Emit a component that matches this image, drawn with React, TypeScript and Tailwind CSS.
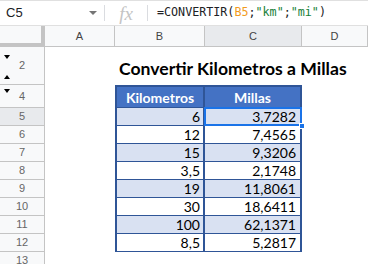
const data = [
  { n: 5, km: "6", mi: "3,7282" },
  { n: 6, km: "12", mi: "7,4565" },
  { n: 7, km: "15", mi: "9,3206" },
  { n: 8, km: "3,5", mi: "2,1748" },
  { n: 9, km: "19", mi: "11,8061" },
  { n: 10, km: "30", mi: "18,6411" },
  { n: 11, km: "100", mi: "62,1371" },
  { n: 12, km: "8,5", mi: "5,2817" },
];

function Toolbar() {
  return (
    <div className="flex items-center h-[26px] border-t border-b border-[#e0e0e0] font-['Liberation_Sans',sans-serif]">
      <div className="flex items-center justify-between w-[104px] pl-[6px] pr-[7px]">
        <span className="text-[13px] text-[#202124]">C5</span>
        <span className="w-0 h-0 border-l-[4px] border-r-[4px] border-t-[4px] border-l-transparent border-r-transparent border-t-[#757575]" />
      </div>
      <div className="w-px h-[16px] bg-[#dadce0]" />
      <div className="w-[42px] flex justify-center">
        <span className="font-['Liberation_Serif',serif] italic text-[19px] leading-none text-[#c4c4c4]">fx</span>
      </div>
      <div className="w-px h-[16px] bg-[#dadce0]" />
      <div className="pl-[9px] font-['DejaVu_Sans_Mono',monospace] text-[11.7px] text-[#202124] whitespace-nowrap">
        =CONVERTIR(<span className="text-[#f29b1d]">B5</span>;<span className="text-[#188038]">"km"</span>;<span className="text-[#188038]">"mi"</span>)
      </div>
    </div>
  );
}

function ColumnHeaders() {
  const cols = [
    { l: "A", w: "w-[70px]", sel: false },
    { l: "B", w: "w-[90px]", sel: false },
    { l: "C", w: "w-[97px]", sel: true },
    { l: "D", w: "w-[66px]", sel: false },
  ];
  return (
    <div className="flex h-[21px] font-['Liberation_Sans',sans-serif] text-[11px] text-[#444]">
      <div className="w-[45px] bg-[#f8f9fa] border-r-4 border-b-4 border-[#c4c4c4]" />
      {cols.map((c) => (
        <div
          key={c.l}
          className={`${c.w} flex items-center justify-center border-r border-b border-[#c4c4c4] ${c.sel ? "bg-[#e8eaed]" : "bg-[#f8f9fa]"}`}
        >
          {c.l}
        </div>
      ))}
    </div>
  );
}

function RowHeaders() {
  const cell =
    "relative flex items-center justify-center border-b border-[#c4c4c4]";
  return (
    <div className="w-[45px] shrink-0 bg-[#f8f9fa] border-r border-[#c4c4c4] font-['Liberation_Sans',sans-serif] text-[11px] text-[#666]">
      <div className={`${cell} h-[38px]`}>
        <span className="absolute top-[8px] left-[4px] w-0 h-0 border-l-[3px] border-r-[3px] border-t-[4px] border-l-transparent border-r-transparent border-t-black" />
        2
        <span className="absolute bottom-[5px] left-[4px] w-0 h-0 border-l-[3px] border-r-[3px] border-b-[4px] border-l-transparent border-r-transparent border-b-black" />
      </div>
      <div className={`${cell} h-[23px]`}>
        <span className="absolute top-[4px] left-[4px] w-0 h-0 border-l-[3px] border-r-[3px] border-t-[4px] border-l-transparent border-r-transparent border-t-black" />
        4
      </div>
      {data.map((r) => (
        <div
          key={r.n}
          className={`${cell} h-[18px] ${r.n === 5 ? "bg-[#e8eaed]" : ""}`}
        >
          {r.n}
        </div>
      ))}
      <div className={`${cell} h-[18px]`}>13</div>
    </div>
  );
}

export default function App() {
  return (
    <div className="w-[368px] h-[264px] overflow-hidden bg-white">
      <Toolbar />
      <ColumnHeaders />
      <div className="flex">
        <RowHeaders />
        <div className="flex-1 font-['Lato',sans-serif]">
          <div className="h-[38px] flex items-end pl-[74px] pb-[7px]">
            <span className="font-bold text-[17.6px] leading-none text-black whitespace-nowrap">
              Convertir Kilometros a Millas
            </span>
          </div>
          <div className="ml-[70px] w-[187px] text-[14px]">
            <div className="flex h-[23px] bg-[#4472c4] border-2 border-b border-[#2f5597] text-white font-bold">
              <div className="w-[88px] flex items-center justify-center border-r-2 border-[#2f5597]">
                Kilometros
              </div>
              <div className="flex-1 flex items-center justify-center">
                Millas
              </div>
            </div>
            {data.map((r, i) => (
              <div
                key={r.n}
                className={`flex h-[18px] border-x-2 border-b border-[#2f5597] text-black ${i % 2 === 0 ? "bg-[#d9e1f2]" : "bg-white"}`}
              >
                <div className="w-[88px] flex items-center justify-end pr-[3px] border-r-2 border-[#2f5597]">
                  {r.km}
                </div>
                <div className="relative flex-1 flex items-center justify-end pr-[4px]">
                  {r.mi}
                  {r.n === 5 && (
                    <>
                      <span className="absolute -top-px -left-px -right-[2px] -bottom-px border-2 border-[#1a73e8]" />
                      <span className="absolute -right-[5px] -bottom-[4px] w-[6px] h-[6px] bg-[#1a73e8] border border-white" />
                    </>
                  )}
                </div>
              </div>
            ))}
          </div>
        </div>
      </div>
    </div>
  );
}
